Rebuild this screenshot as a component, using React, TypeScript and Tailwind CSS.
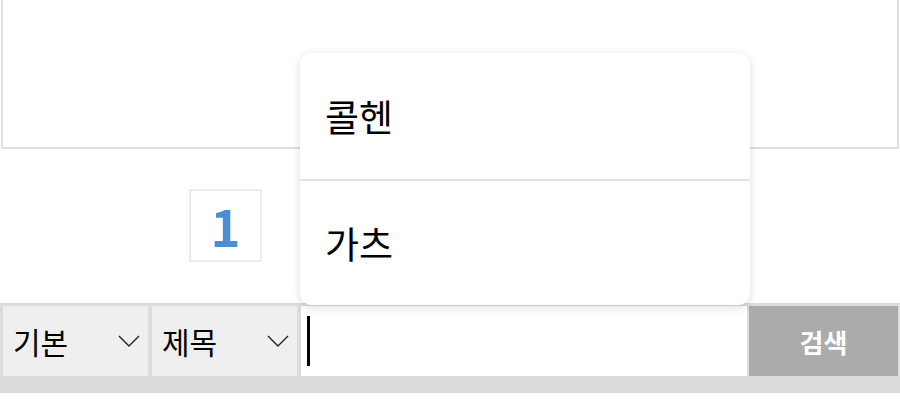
import { useState } from "react";

const FONT = { fontFamily: '"Noto Sans CJK KR", "Noto Sans", sans-serif' };

const SUGGESTIONS = ["콜헨", "가츠"];

function Chevron() {
  return (
    <svg width="22" height="12" viewBox="0 0 22 12" fill="none" className="shrink-0">
      <path d="M1 1l10 10 10-10" stroke="#222" strokeWidth="1.4" />
    </svg>
  );
}

function SelectBox({ label }: { label: string }) {
  return (
    <div className="flex h-full flex-1 items-center justify-between bg-[#efefef] pl-[10px] pr-[8px]">
      <span className="text-[30px] leading-none text-black">{label}</span>
      <Chevron />
    </div>
  );
}

export default function App() {
  const [query] = useState("");

  return (
    <div className="relative h-[409px] w-[900px] overflow-hidden bg-white" style={FONT}>
      <div className="mx-[1px] h-[149px] border-2 border-t-0 border-[#dedede] bg-white" />

      <div className="flex h-[154px] items-start pt-[40px] pl-[189px]">
        <div className="flex h-[73px] w-[73px] items-center justify-center border-2 border-[#ececec]">
          <span className="text-[51px] font-bold leading-none text-[#4a8fd6]">1</span>
        </div>
      </div>

      <div className="flex h-[90px] items-start bg-[#dcdcdc] pt-[3px]">
        <div className="flex h-[70px] w-full items-stretch">
          <div className="ml-[3px] flex w-[145px]">
            <SelectBox label="기본" />
          </div>
          <div className="ml-[4px] flex w-[145px]">
            <SelectBox label="제목" />
          </div>
          <div className="ml-[4px] flex w-[446px] items-center bg-white pl-[6px]">
            <div className="h-[50px] w-[3px] bg-black" />
            <span className="sr-only">{query}</span>
          </div>
          <button className="ml-[2px] flex w-[149px] items-center justify-center bg-[#ababab] text-[26px] font-bold text-white">
            검색
          </button>
        </div>
      </div>

      <div className="absolute left-[300px] top-[53px] w-[450px] overflow-hidden rounded-[12px] bg-white shadow-[0_2px_10px_rgba(0,0,0,0.14)]">
        {SUGGESTIONS.map((item, i) => (
          <div
            key={item}
            className={
              "flex h-[126px] items-center pl-[25px] text-[37px] leading-none text-black " +
              (i > 0 ? "border-t-2 border-[#e3e3e3]" : "")
            }
          >
            {item}
          </div>
        ))}
      </div>
    </div>
  );
}
